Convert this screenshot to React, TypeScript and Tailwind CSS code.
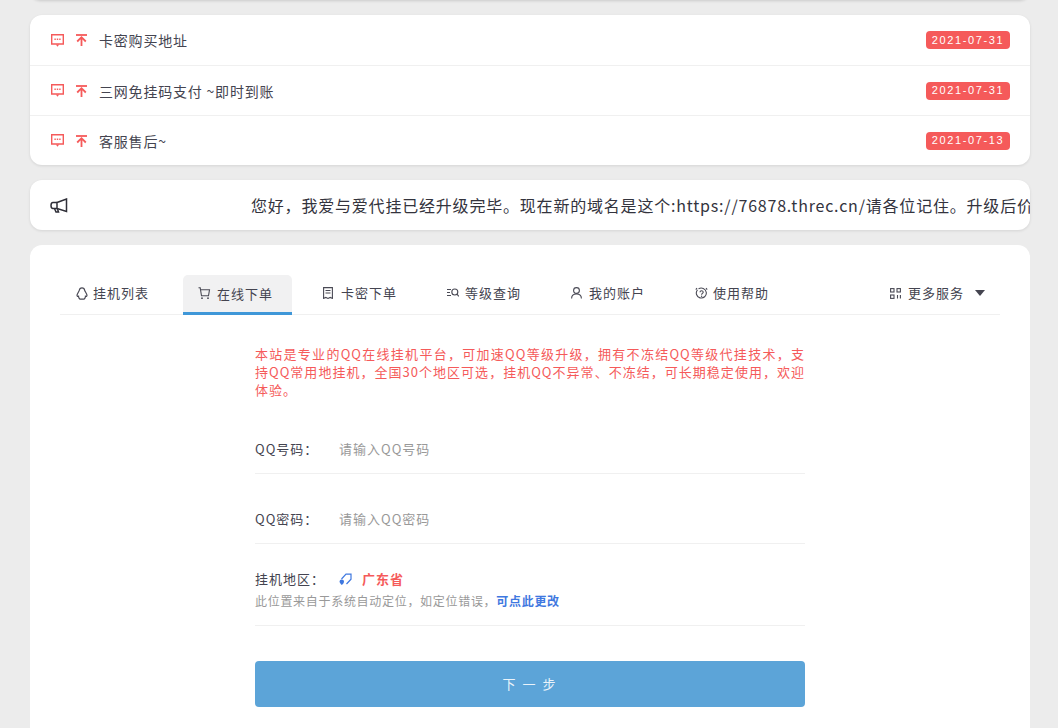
const notices = [
  { title: "卡密购买地址", date: "2021-07-31" },
  { title: "三网免挂码支付 ~即时到账", date: "2021-07-31" },
  { title: "客服售后~", date: "2021-07-13" },
];

function ChatIcon() {
  return (
    <svg width="13" height="13" viewBox="0 0 13 13" fill="none" stroke="#f55a5a" strokeWidth="1.400">
      <path d="M.7.700h11.600v9.300H.7z" />
      <path d="M4.800 10.500h3.400L6.500 12.700z" fill="#f55a5a" stroke="none" />
      <path d="M3.400 5.200h1.400M5.800 5.200h1.400M8.200 5.200h1.400" strokeWidth="1.600" />
    </svg>
  );
}

function TopIcon() {
  return (
    <svg width="11" height="12" viewBox="0 0 11 12" fill="none" stroke="#f55a5a" strokeWidth="1.800">
      <path d="M0 1h11" />
      <path d="M5.500 12V3.500M1.200 7.500L5.500 3.200 9.800 7.500" />
    </svg>
  );
}

function HornIcon() {
  return (
    <svg width="18" height="15" viewBox="0 0 18 15" fill="none" stroke="#2f2f38" strokeWidth="1.500">
      <path d="M7 4.500L16.500 1v12.500L7 10.500z" />
      <path d="M7 4.500H3C1.700 4.500 1 5.500 1 7.500s.7 3 2 3h4" />
      <path d="M4.500 10.500l1.500 3.500h2.500l-1-3" />
    </svg>
  );
}

function QqIcon() {
  return (
    <svg width="12" height="13" viewBox="0 0 12 13" fill="none" stroke="#4a4a55" strokeWidth="1.200">
      <path d="M6 .8c1.500 0 2.500 1 2.700 2.500.1.800 2.300 3.500 2.300 5 0 1.200-1 1.300-1.500 1 0 1.200-.5 2.200-1.500 2.900H4c-1-.7-1.500-1.700-1.500-2.900-.5.300-1.500.2-1.500-1 0-1.500 2.200-4.200 2.300-5C3.500 1.800 4.500.8 6 .8z" />
    </svg>
  );
}

function CartIcon() {
  return (
    <svg width="13" height="13" viewBox="0 0 13 13" fill="none" stroke="#4a4a55" strokeWidth="1.100">
      <path d="M.5.800h1.700l1.300 8h7l1-6H2.600" />
      <circle cx="4" cy="11.200" r=".9" fill="#4a4a55" stroke="none" />
      <circle cx="10" cy="11.200" r=".9" fill="#4a4a55" stroke="none" />
    </svg>
  );
}

function ReceiptIcon() {
  return (
    <svg width="10" height="12" viewBox="0 0 10 12" fill="none" stroke="#4a4a55" strokeWidth="1.100">
      <path d="M.6.600h8.800v10.800l-2.200-1-2.200 1-2.200-1-2.200 1z" />
      <path d="M2.500 3.500h5M2.500 6h5" />
    </svg>
  );
}

function SearchListIcon() {
  return (
    <svg width="12" height="11" viewBox="0 0 12 11" fill="none" stroke="#4a4a55" strokeWidth="1.100">
      <path d="M0 1.500h4M0 4.500h3M0 7.500h4" />
      <circle cx="7.800" cy="4" r="3" />
      <path d="M10 6.200l1.800 2.300" />
    </svg>
  );
}

function UserIcon() {
  return (
    <svg width="11" height="12" viewBox="0 0 11 12" fill="none" stroke="#4a4a55" strokeWidth="1.100">
      <circle cx="5.500" cy="3.500" r="2.900" />
      <path d="M.6 11.500c0-2.800 1.800-4.500 4.900-4.500s4.900 1.700 4.900 4.500" />
    </svg>
  );
}

function HelpIcon() {
  return (
    <svg width="13" height="13" viewBox="0 0 13 13" fill="none" stroke="#4a4a55" strokeWidth="1.100">
      <path d="M2 1.200L.8 2.600M11 1.200l1.200 1.400" />
      <path d="M3.500 1.900a5 5 0 1 1-1 .9" />
      <path d="M5 5.300c0-2 3.200-2 3.200-.1 0 1.200-1.600 1.200-1.600 2.500" />
      <circle cx="6.600" cy="9.300" r=".7" fill="#4a4a55" stroke="none" />
    </svg>
  );
}

function GridIcon() {
  return (
    <svg width="11" height="11" viewBox="0 0 11 11" fill="none" stroke="#4a4a55" strokeWidth="1.100">
      <rect x=".6" y=".6" width="3.400" height="3.400" />
      <rect x="7" y=".6" width="3.400" height="3.400" />
      <rect x=".6" y="7" width="3.400" height="3.400" />
      <path d="M7.500 7v3.500M10.400 7v3.500" />
    </svg>
  );
}

function PinIcon() {
  return (
    <svg width="13" height="13" viewBox="0 0 13 13" fill="none" stroke="#3f78e0" strokeWidth="1.200">
      <path d="M2.500 6L7 1.200h5v5L7.500 11" />
      <path d="M.6 8.500c0-1.200.9-2 2.100-2s2.300.9 2.300 2.100-1 2.700-2.200 3.400C1.600 11.200.6 9.600.6 8.500z" fill="#3f78e0" stroke="none" />
    </svg>
  );
}

function Field({ label, placeholder }: { label: string; placeholder: string }) {
  return (
    <div className="flex items-center h-[70px] pt-[20px] border-b border-[#f0f0f0]">
      <span className="w-[84px] text-[13px] text-[#444450] tracking-[1px]">{label}</span>
      <span className="text-[13px] text-[#999] tracking-[1px]">{placeholder}</span>
    </div>
  );
}

const tabs = [
  { label: "挂机列表", icon: <QqIcon />, slot: "w-[17px]", cls: "w-[123px] pl-[16px]" },
  { label: "在线下单", icon: <CartIcon />, slot: "w-[19px]", cls: "w-[109px] pl-[15px]", active: true },
  { label: "卡密下单", icon: <ReceiptIcon />, slot: "w-[18px]", cls: "w-[124px] pl-[31px]" },
  { label: "等级查询", icon: <SearchListIcon />, slot: "w-[18px]", cls: "w-[124px] pl-[31px]" },
  { label: "我的账户", icon: <UserIcon />, slot: "w-[18px]", cls: "w-[124px] pl-[31px]" },
  { label: "使用帮助", icon: <HelpIcon />, slot: "w-[18px]", cls: "w-[124px] pl-[31px]" },
];

export default function App() {
  return (
    <div className="h-[728px] overflow-hidden bg-[#ececec] pl-[30px] pr-[28px] font-['Noto_Sans_CJK_SC','Noto_Sans',sans-serif] text-[#444450]">
      {/* bottom edge of the card above */}
      <div className="h-[20px] -mt-[20px] mb-[15px] bg-white rounded-[12px] shadow-[0_1px_3px_rgba(0,0,0,0.14)]"></div>

      {/* Notices */}
      <div className="bg-white rounded-[12px] shadow-[0_1px_3px_rgba(0,0,0,0.1)] mb-[15px]">
        {notices.map((n, i) => (
          <div
            key={n.title}
            className={`flex items-center h-[50px] pl-[21px] pr-[20px] ${i > 0 ? "border-t border-[#f0f0f0]" : ""}`}
          >
            <span className="w-[25px] flex"><ChatIcon /></span>
            <span className="w-[23px] flex"><TopIcon /></span>
            <span className="flex-1 text-[14px] tracking-[0.8px] mt-[1px]">{n.title}</span>
            <span className="h-[18px] w-[84px] flex items-center justify-center rounded-[4px] bg-[#f55a5a] text-white text-[11px] tracking-[1.600px] font-['Liberation_Sans',sans-serif]">
              {n.date}
            </span>
          </div>
        ))}
      </div>

      {/* Marquee */}
      <div className="flex items-center h-[50px] overflow-hidden bg-white rounded-[12px] shadow-[0_1px_3px_rgba(0,0,0,0.1)] mb-[15px] pl-[20px]">
        <span className="flex shrink-0"><HornIcon /></span>
        <div className="flex-1 overflow-hidden whitespace-nowrap ml-[183px] text-[16px] text-[#33333d] tracking-[0.8px]">
          您好，我爱与爱代挂已经升级完毕。现在新的域名是这个:https://76878.threc.cn/请各位记住。升级后价格不变，功能更加完善。
        </div>
      </div>

      {/* Main card */}
      <div className="bg-white rounded-[12px] h-[600px] px-[30px] pt-[30px]">
        <div className="flex items-stretch h-[40px] border-b border-[#f0f0f0]">
          {tabs.map((t) => (
            <div
              key={t.label}
              className={`flex items-center text-[13px] tracking-[1px] ${t.cls} ${
                t.active ? "bg-[#f1f1f2] rounded-t-[5px] border-b-[3px] border-[#3f97d8] h-[40px]" : "pb-[3px]"
              }`}
            >
              <span className={`flex ${t.slot}`}>{t.icon}</span>
              {t.label}
            </div>
          ))}
          <div className="ml-auto flex items-center pb-[3px] pr-[15px] text-[13px] tracking-[1px]">
            <span className="w-[18px] flex"><GridIcon /></span>
            更多服务
            <span className="ml-[11px] w-0 h-0 border-x-[5.5px] border-x-transparent border-t-[6px] border-t-[#444450]"></span>
          </div>
        </div>

        <div className="w-[550px] ml-[195px]">
          <p className="mt-[30px] mb-[5px] text-[13px] leading-[18px] text-[#f55a5a] tracking-[1px] text-justify">
            本站是专业的QQ在线挂机平台，可加速QQ等级升级，拥有不冻结QQ等级代挂技术，支持QQ常用地挂机，全国30个地区可选，挂机QQ不异常、不冻结，可长期稳定使用，欢迎体验。
          </p>
          <Field label="QQ号码：" placeholder="请输入QQ号码" />
          <Field label="QQ密码：" placeholder="请输入QQ密码" />
          <div className="h-[82px] pt-[25px] border-b border-[#f0f0f0]">
            <div className="flex items-center h-[20px]">
              <span className="w-[84px] text-[13px] tracking-[1px]">挂机地区：</span>
              <PinIcon />
              <span className="ml-[10px] text-[13px] font-bold text-[#f55a5a] tracking-[1px]">广东省</span>
            </div>
            <div className="mt-[3px] text-[12px] text-[#999] tracking-[0.7px]">
              此位置来自于系统自动定位，如定位错误，<span className="font-bold text-[#3f78e0]">可点此更改</span>
            </div>
          </div>
          <button className="mt-[35px] w-full h-[46px] rounded-[4px] bg-[#5ca4d8] text-[#eaf3fa] text-[13px] tracking-[2px]">
            下 一 步
          </button>
        </div>
      </div>
    </div>
  );
}
